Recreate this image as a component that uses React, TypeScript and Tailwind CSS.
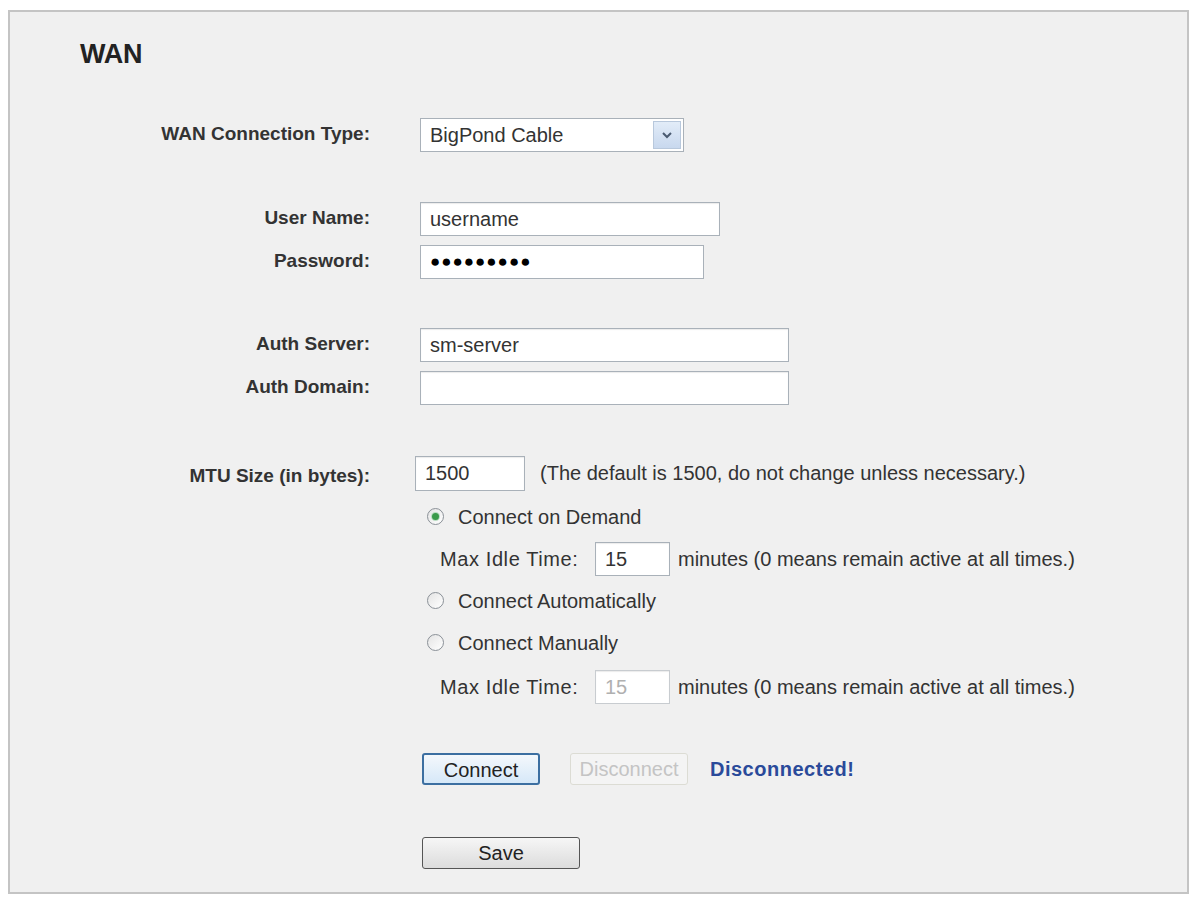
import React from "react";

const font = { fontFamily: '"Liberation Sans", Arial, sans-serif' };

function Label({ children, className = "" }: { children: React.ReactNode; className?: string }) {
  return (
    <div className={`w-[360px] shrink-0 text-right text-[19px] font-bold text-[#333] ${className}`}>
      {children}
    </div>
  );
}

function TextBox({ value, width, disabled = false }: { value: string; width: string; disabled?: boolean }) {
  return (
    <div
      className={`flex h-[34px] items-center border bg-white pl-[9px] text-[20px] shadow-[inset_0_1px_1px_rgba(0,0,0,0.08)] ${width} ${
        disabled ? "border-[#c8ccd0] text-[#b0b0b0]" : "border-[#a9b1b9] text-[#333]"
      }`}
    >
      {value}
    </div>
  );
}

function Radio({ checked, label }: { checked?: boolean; label: string }) {
  return (
    <div className="flex h-[42px] items-center pl-[12px]">
      <span className="flex h-[17px] w-[17px] items-center justify-center rounded-full border border-[#8a9097] bg-gradient-to-br from-[#e4e4e4] to-white">
        {checked && <span className="h-[7px] w-[7px] rounded-full bg-[#3a9a4a] shadow-[0_0_0_1px_#b8dcc0]" />}
      </span>
      <span className="ml-[14px] text-[20px] text-[#333]">{label}</span>
    </div>
  );
}

function IdleRow({ disabled = false }: { disabled?: boolean }) {
  return (
    <div className="flex h-[42px] items-center pl-[25px] text-[20px] text-[#333]">
      <span className="w-[155px] tracking-[0.6px]">Max Idle Time:</span>
      <TextBox value="15" width="w-[75px]" disabled={disabled} />
      <span className="ml-[8px]">minutes (0 means remain active at all times.)</span>
    </div>
  );
}

export default function App() {
  return (
    <div className="h-[898px] w-[1190px] bg-white pt-[10px] pl-[8px]" style={font}>
      <div className="h-[884px] w-[1181px] border-2 border-[#c4c4c4] bg-[#f0f0f0]">
        <div className="pt-[22px] pl-[70px] text-[27px] font-bold tracking-[-0.3px] text-[#222]">WAN</div>

        <div className="mt-[43px] flex items-center">
          <Label>WAN Connection Type:</Label>
          <div className="ml-[50px] flex h-[34px] w-[264px] items-center justify-between border border-[#a9b1b9] bg-white pl-[9px] pr-[2px] text-[20px] text-[#333]">
            <span>BigPond Cable</span>
            <span className="flex h-[28px] w-[28px] items-center justify-center border border-[#b8c8dc] bg-gradient-to-b from-[#e2ecf8] to-[#c8d8ee]">
              <svg width="12" height="8" viewBox="0 0 12 8">
                <path d="M2 2 L6 6 L10 2" fill="none" stroke="#4a5a70" strokeWidth="2" />
              </svg>
            </span>
          </div>
        </div>

        <div className="mt-[50px] flex items-center">
          <Label>User Name:</Label>
          <div className="ml-[50px]">
            <TextBox value="username" width="w-[300px]" />
          </div>
        </div>
        <div className="mt-[9px] flex items-center">
          <Label>Password:</Label>
          <div className="ml-[50px] flex h-[34px] w-[284px] items-center border border-[#a9b1b9] bg-white pl-[9px] text-[17px] tracking-[1px] text-black">
            ●●●●●●●●●
          </div>
        </div>

        <div className="mt-[49px] flex items-center">
          <Label>Auth Server:</Label>
          <div className="ml-[50px]">
            <TextBox value="sm-server" width="w-[369px]" />
          </div>
        </div>
        <div className="mt-[9px] flex items-center">
          <Label>Auth Domain:</Label>
          <div className="ml-[50px]">
            <TextBox value="" width="w-[369px]" />
          </div>
        </div>

        <div className="mt-[51px] flex items-start">
          <Label className="pt-[6px]">MTU Size (in bytes):</Label>
          <div className="ml-[45px] flex flex-col">
            <div className="flex items-center text-[20px] text-[#333]">
              <div className="h-[35px]">
                <TextBox value="1500" width="w-[110px] h-[35px]" />
              </div>
              <span className="ml-[15px]">(The default is 1500, do not change unless necessary.)</span>
            </div>
            <div className="mt-[5px]">
              <Radio checked label="Connect on Demand" />
              <IdleRow />
              <Radio label="Connect Automatically" />
              <Radio label="Connect Manually" />
              <div className="mt-[2px]">
                <IdleRow disabled />
              </div>
            </div>

            <div className="mt-[45px] flex items-center pl-[7px]">
              <button className="h-[32px] w-[118px] rounded-[3px] border-2 border-[#3c6fa1] bg-gradient-to-b from-[#f4f8fc] to-[#d6e8f8] text-[20px] text-[#222]">
                Connect
              </button>
              <button className="ml-[30px] h-[32px] w-[118px] rounded-[3px] border border-[#dcdcd4] bg-[#f4f4f4] text-[20px] text-[#c4c4c4]">
                Disconnect
              </button>
              <span className="ml-[22px] text-[20px] font-bold tracking-[0.5px] text-[#2a4a9a]">Disconnected!</span>
            </div>

            <div className="mt-[52px] pl-[7px]">
              <button className="h-[32px] w-[158px] rounded-[3px] border border-[#555] bg-gradient-to-b from-[#f6f6f6] to-[#dcdcdc] text-[20px] text-[#222]">
                Save
              </button>
            </div>
          </div>
        </div>
      </div>
    </div>
  );
}
